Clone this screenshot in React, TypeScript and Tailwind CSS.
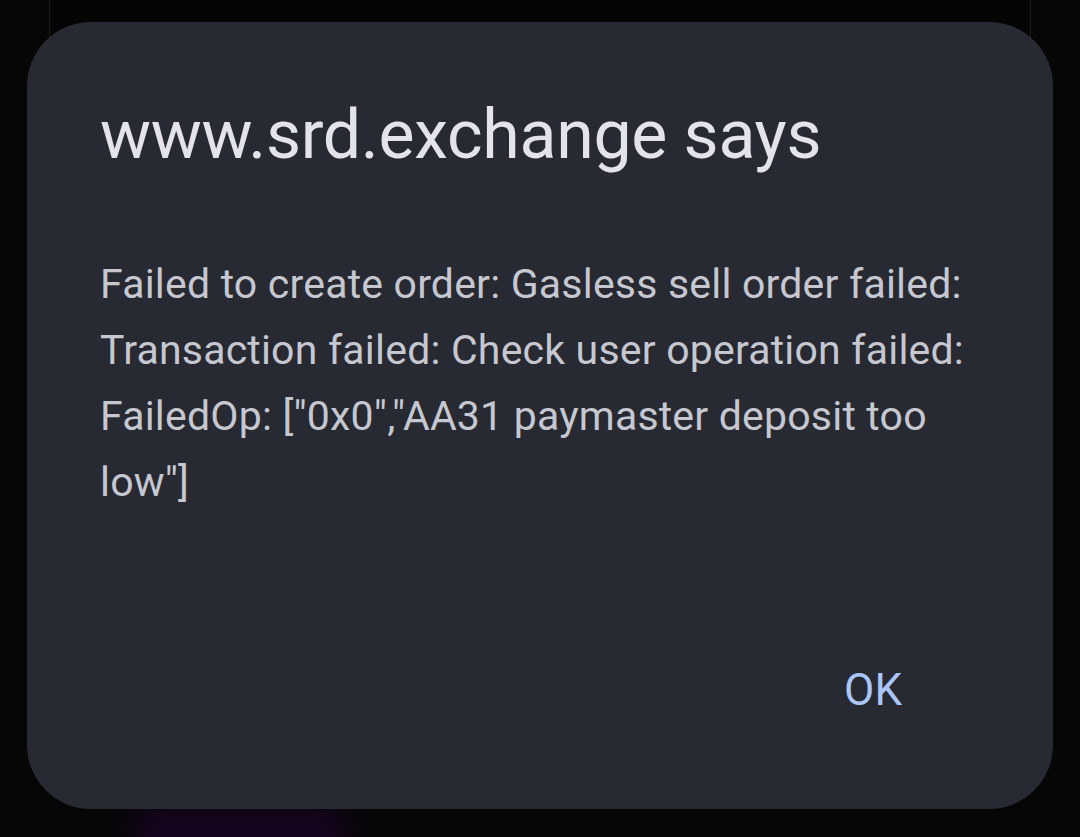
import React from "react";

const App: React.FC = () => {
  return (
    <div
      className="relative h-[837px] w-[1080px] overflow-hidden bg-[#060607]"
      style={{ fontFamily: "Roboto, 'Noto Sans', sans-serif" }}
    >
      {/* page behind the dialog */}
      <div className="mx-[49px] h-[120px] border-x border-[#1c1c1f] bg-[#050506]" />
      <div className="absolute bottom-[-20px] left-[130px] h-[50px] w-[220px] rounded-full bg-[#16041f] blur-[12px]" />

      {/* alert dialog */}
      <div className="absolute left-[27px] top-[22px] flex h-[787px] w-[1026px] flex-col rounded-[64px] bg-[#282a33] px-[73px] pt-[78px]">
        <h1 className="text-[68px] leading-[70px] tracking-[-0.3px] text-[#e4e2ea]">
          www.srd.exchange says
        </h1>
        <p className="mt-[81px] text-[41px] leading-[66px] tracking-[0.2px] text-[#c7c7cf]">
          Failed to create order: Gasless sell order failed: Transaction failed: Check user operation failed:
          FailedOp: [″0x0″,″AA31 paymaster deposit too low″]
        </p>
        <div className="mt-auto mb-[97px] flex justify-end pr-[78px]">
          <button className="text-[44px] leading-none text-[#abc6f6]">OK</button>
        </div>
      </div>
    </div>
  );
};

export default App;
